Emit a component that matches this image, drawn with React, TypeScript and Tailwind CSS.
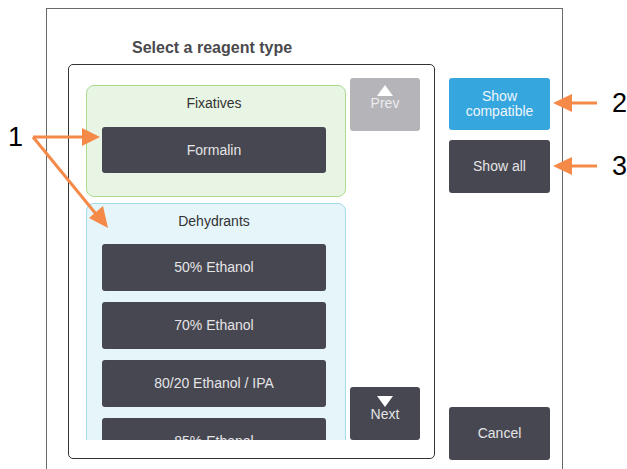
import { ReactNode } from 'react';

const font = { fontFamily: '"Liberation Sans", Arial, sans-serif' };

function DarkButton({ children, className = '' }: { children: ReactNode; className?: string }) {
  return (
    <div
      className={`flex items-center justify-center rounded-[3px] bg-[#474751] text-[14px] text-[#e4e4e6] ${className}`}
    >
      {children}
    </div>
  );
}

function Annotations() {
  const orange = '#f58a48';
  return (
    <svg className="absolute inset-0 pointer-events-none" width="627" height="469" viewBox="0 0 627 469">
      {/* 1 */}
      <line x1="33" y1="137" x2="84" y2="137" stroke={orange} strokeWidth="3" />
      <polygon points="100,137 82,128 82,146" fill={orange} />
      <line x1="33" y1="137" x2="96" y2="214" stroke={orange} strokeWidth="3" />
      <polygon points="108,228 89,218 103,206" fill={orange} />
      {/* 2 */}
      <line x1="597" y1="103" x2="568" y2="103" stroke={orange} strokeWidth="3" />
      <polygon points="553,103 572,94 572,112" fill={orange} />
      {/* 3 */}
      <line x1="597" y1="166" x2="568" y2="166" stroke={orange} strokeWidth="3" />
      <polygon points="553,166 572,157 572,175" fill={orange} />
    </svg>
  );
}

export default function App() {
  const dehydrants = ['50% Ethanol', '70% Ethanol', '80/20 Ethanol / IPA', '85% Ethanol'];

  return (
    <div className="relative h-[469px] w-[627px] overflow-hidden bg-white" style={font}>
      {/* Dialog */}
      <div className="ml-[46px] mt-[8px] flex h-[461px] w-[517px] border-x-[1.5px] border-t-[1.5px] border-[#6a6a6a]">
        {/* Left column */}
        <div className="ml-[21px] flex flex-col">
          <div className="ml-[64px] mt-[29px] h-[26px] text-[16px] font-bold leading-[20px] text-[#4a4a4e]">
            Select a reagent type
          </div>
          <div className="flex h-[395px] w-[367px] rounded-[5px] border border-[#333]">
            {/* Scroll list */}
            <div className="ml-[17px] mt-[20px] flex h-[355px] w-[260px] flex-col gap-[6px] overflow-hidden">
              <div className="flex shrink-0 flex-col rounded-[8px] border border-[#a9dc8f] bg-[#e9f5e4] pb-[23px] pl-[15px] pr-[19px]">
                <div className="h-[41px] pt-[9px] text-center text-[14px] leading-[16px] text-[#333]">Fixatives</div>
                <DarkButton className="h-[46px]">Formalin</DarkButton>
              </div>
              <div className="flex shrink-0 flex-col rounded-[8px] border border-[#9fdcec] bg-[#e5f5fa] pb-[20px] pl-[15px] pr-[19px]">
                <div className="h-[40px] pt-[9px] text-center text-[14px] leading-[16px] text-[#333]">Dehydrants</div>
                <div className="flex flex-col gap-[11px]">
                  {dehydrants.map((d) => (
                    <DarkButton key={d} className="h-[47px]">
                      {d}
                    </DarkButton>
                  ))}
                </div>
              </div>
            </div>
            {/* Prev / Next */}
            <div className="ml-[4px] mt-[13px] flex h-[362px] w-[70px] flex-col justify-between">
              <div className="flex h-[53px] flex-col items-center rounded-[3px] bg-[#b5b5b9] pt-[7px] text-[14px] leading-[15px] text-[#ececee]">
                <span className="h-0 w-0 border-x-[8px] border-b-[11px] border-x-transparent border-b-white" />
                <span>Prev</span>
              </div>
              <div className="flex h-[53px] flex-col items-center rounded-[3px] bg-[#474751] pt-[9px] text-[14px] leading-[14px] text-[#e4e4e6]">
                <span className="h-0 w-0 border-x-[8px] border-t-[11px] border-x-transparent border-t-white" />
                <span>Next</span>
              </div>
            </div>
          </div>
        </div>
        {/* Right column */}
        <div className="ml-[14px] mt-[69px] flex h-[382px] w-[101px] flex-col">
          <div className="flex h-[52px] flex-col items-center justify-center rounded-[3px] bg-[#36a6de] text-[14px] leading-[15px] text-[#eef6fb]">
            <span>Show</span>
            <span>compatible</span>
          </div>
          <DarkButton className="mt-[10px] h-[53px]">Show all</DarkButton>
          <div className="flex-1" />
          <DarkButton className="h-[53px]">Cancel</DarkButton>
        </div>
      </div>

      {/* Callout labels */}
      <div className="absolute left-[8px] top-[122px] text-[27px] leading-[30px] text-black">1</div>
      <div className="absolute left-[612px] top-[88px] text-[27px] leading-[30px] text-black">2</div>
      <div className="absolute left-[612px] top-[151px] text-[27px] leading-[30px] text-black">3</div>
      <Annotations />
    </div>
  );
}
